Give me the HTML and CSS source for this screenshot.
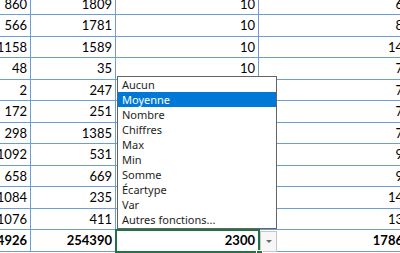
FILE: index.html
```html
<!DOCTYPE html>
<html>
<head>
<meta charset="utf-8">
<link rel="stylesheet" href="styles.css">
</head>
<body>
<div class="page">
  <div class="sheet">
    <div class="c">860</div><div class="c">1809</div><div class="c">10</div><div class="c">6</div>
    <div class="c">566</div><div class="c">1781</div><div class="c">10</div><div class="c">8</div>
    <div class="c">1158</div><div class="c">1589</div><div class="c">10</div><div class="c">14</div>
    <div class="c">48</div><div class="c">35</div><div class="c">10</div><div class="c">7</div>
    <div class="c">2</div><div class="c">247</div><div class="c">10</div><div class="c">7</div>
    <div class="c">172</div><div class="c">251</div><div class="c">10</div><div class="c">7</div>
    <div class="c">298</div><div class="c">1385</div><div class="c">10</div><div class="c">7</div>
    <div class="c">1092</div><div class="c">531</div><div class="c">10</div><div class="c">9</div>
    <div class="c">658</div><div class="c">669</div><div class="c">10</div><div class="c">9</div>
    <div class="c">1084</div><div class="c">235</div><div class="c">10</div><div class="c">14</div>
    <div class="c">1076</div><div class="c">411</div><div class="c">10</div><div class="c">13</div>
    <div class="c b">14926</div><div class="c b">254390</div><div class="c b sel">2300</div><div class="c b">1786</div>
  </div>

  <ul class="menu">
    <li>Aucun</li>
    <li class="on">Moyenne</li>
    <li>Nombre</li>
    <li>Chiffres</li>
    <li>Max</li>
    <li>Min</li>
    <li>Somme</li>
    <li>Écartype</li>
    <li>Var</li>
    <li>Autres fonctions...</li>
  </ul>

  <div class="drop"><span class="tri"></span></div>
  <div class="handle"></div>
</div>
</body>
</html>
```

FILE: styles.css
```css
html, body {
  margin: 0;
  padding: 0;
  background: #ffffff;
  overflow: hidden;
}

.page {
  position: relative;
  width: 400px;
  height: 253px;
  overflow: hidden;
}

.sheet {
  display: grid;
  grid-template-columns: 90px 85px 143px 148px;
  grid-auto-rows: 21.5px;
  margin-left: -59px;
  margin-top: -6.5px;
  font-family: Lato, "Liberation Sans", sans-serif;
  font-size: 13px;
  color: #000;
}

.c {
  box-sizing: border-box;
  border-right: 1px solid #6a9edb;
  border-bottom: 1px solid #6a9edb;
  text-align: right;
  padding-right: 3px;
  line-height: 17px;
  padding-top: 2px;
  white-space: nowrap;
  overflow: visible;
}

.b {
  font-weight: bold;
}

.sel {
  outline: 2px solid #217346;
  outline-offset: -1px;
  position: relative;
  z-index: 1;
}

.menu {
  position: absolute;
  left: 117px;
  top: 76px;
  width: 160px;
  box-sizing: border-box;
  margin: 0;
  padding: 0 0 1px 0;
  list-style: none;
  background: #ffffff;
  border: 1px solid #646464;
  font-family: "Noto Sans", "Open Sans", sans-serif;
  font-size: 11px;
  color: #1e1e1e;
  z-index: 2;
}

.menu li {
  height: 15px;
  line-height: 15px;
  padding-left: 4px;
  white-space: nowrap;
}

.menu li.on {
  background: #0078d7;
  color: #ffffff;
}

.drop {
  position: absolute;
  left: 260px;
  top: 231px;
  width: 17px;
  height: 21px;
  box-sizing: border-box;
  border: 1px solid #c6c6c6;
  background: #f7f7f7;
  display: flex;
  align-items: center;
  justify-content: center;
  z-index: 2;
}

.tri {
  width: 0;
  height: 0;
  border-left: 3px solid transparent;
  border-right: 3px solid transparent;
  border-top: 3px solid #6a6a6a;
}

.handle {
  position: absolute;
  left: 256px;
  top: 250px;
  width: 5px;
  height: 5px;
  background: #217346;
  border: 1px solid #ffffff;
  z-index: 3;
}
```
